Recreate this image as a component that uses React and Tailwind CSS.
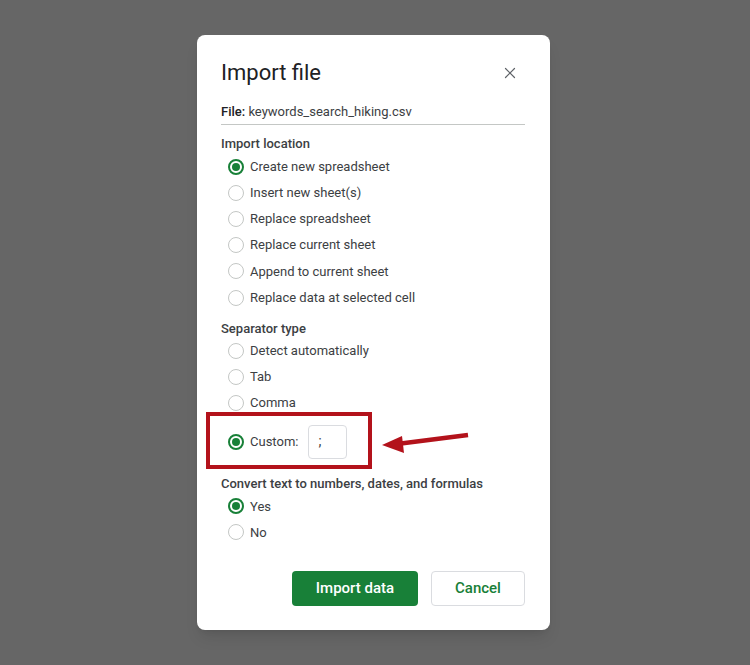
import React from 'react';
import { X } from 'lucide-react';

const Radio = ({ checked, label }) => (
  <div className="flex items-center h-[26.2px]">
    <span
      className={`w-[16px] h-[16px] rounded-full flex items-center justify-center ml-[7px] mr-[6px] ${
        checked ? 'border-2 border-[#188038]' : 'border border-[#c4c7c5]'
      }`}
    >
      {checked && <span className="w-[8px] h-[8px] rounded-full bg-[#188038]" />}
    </span>
    <span className="text-[13px] text-[#3c4043]">{label}</span>
  </div>
);

const SectionLabel = ({ className, children }) => (
  <div className={`text-[13px] leading-[18px] font-medium text-[#3c4043] ${className}`}>{children}</div>
);

const App = () => {
  return (
    <div className="min-h-screen w-full bg-[#666666] flex items-center justify-center pr-[3px] font-['Roboto',sans-serif]">
      <div className="w-[353px] bg-white rounded-[8px] pt-[24px] pb-[24px] pl-[24px] pr-[25px] shadow-lg">
        <div className="flex items-center justify-between h-[28px]">
          <h1 className="text-[22px] text-[#202124] leading-[28px]">Import file</h1>
          <X size={18} strokeWidth={1.6} className="text-[#5f6368] mr-[6px]" />
        </div>

        <div className="mt-[15px] pb-[2px] border-b border-[#c4c7c5] text-[13px] leading-[20px] text-[#3c4043]">
          <span className="font-medium text-[#202124]">File:</span> keywords_search_hiking.csv
        </div>

        <SectionLabel className="mt-[10px]">Import location</SectionLabel>
        <Radio checked label="Create new spreadsheet" />
        <Radio label="Insert new sheet(s)" />
        <Radio label="Replace spreadsheet" />
        <Radio label="Replace current sheet" />
        <Radio label="Append to current sheet" />
        <Radio label="Replace data at selected cell" />

        <SectionLabel className="mt-[9px]">Separator type</SectionLabel>
        <Radio label="Detect automatically" />
        <Radio label="Tab" />
        <Radio label="Comma" />
        <div className="relative flex items-center h-[51px]">
          <span className="w-[16px] h-[16px] rounded-full flex items-center justify-center ml-[7px] mr-[6px] border-2 border-[#188038]">
            <span className="w-[8px] h-[8px] rounded-full bg-[#188038]" />
          </span>
          <span className="text-[13px] text-[#3c4043]">Custom:</span>
          <div className="ml-[10px] w-[39px] h-[34px] border border-[#dadce0] rounded-[4px] flex items-center pl-[9px] text-[14px] text-[#3c4043]">;</div>
          <div className="absolute left-[-15px] top-[-4px] w-[166px] h-[57px] border-4 border-[#b3121b]" />
          <svg className="absolute left-[160px] top-[14px]" width="92" height="26" viewBox="0 0 92 26">
            <line x1="87" y1="5" x2="16" y2="14" stroke="#b3121b" strokeWidth="4.5" />
            <polygon points="1,15 21,6 23,23" fill="#b3121b" />
          </svg>
        </div>

        <SectionLabel className="mt-[8px]">Convert text to numbers, dates, and formulas</SectionLabel>
        <Radio checked label="Yes" />
        <Radio label="No" />

        <div className="mt-[25px] flex justify-end gap-[13px]">
          <button className="w-[126px] h-[35px] rounded-[4px] bg-[#188038] text-white text-[15px] font-medium">
            Import data
          </button>
          <button className="w-[94px] h-[35px] rounded-[4px] border border-[#dadce0] bg-white text-[#188038] text-[15px] font-medium">
            Cancel
          </button>
        </div>
      </div>
    </div>
  );
};

export default App;
